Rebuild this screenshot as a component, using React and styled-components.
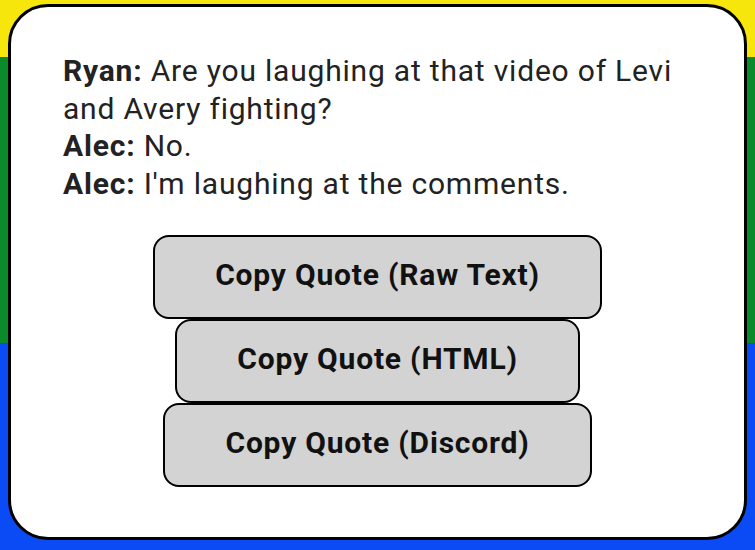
import React from 'react'
import styled, { createGlobalStyle } from 'styled-components'

const GlobalStyle = createGlobalStyle`
html, body {
  margin: 0;
  padding: 0;
}
body {
  font-family: Roboto, "Liberation Sans", sans-serif;
  background: linear-gradient(
    to bottom,
    #f6e60c 0px,
    #f6e60c 57px,
    #0b8a2b 57px,
    #0b8a2b 343px,
    #0a4bf5 343px
  );
  min-height: 550px;
}
`

const lines = [
    { who: 'Ryan', says: 'Are you laughing at that video of Levi and Avery fighting?' },
    { who: 'Alec', says: 'No.' },
    { who: 'Alec', says: "I'm laughing at the comments." },
]

const buttons = ['Copy Quote (Raw Text)', 'Copy Quote (HTML)', 'Copy Quote (Discord)']

function App() {
    return (
        <Page>
            <GlobalStyle />
            <Card>
                <Quote>
                    {lines.map((line, i) => (
                        <Line key={i}>
                            <Name>{line.who}:</Name>&nbsp;{line.says}
                        </Line>
                    ))}
                </Quote>
                <Buttons>
                    {buttons.map((label) => (
                        <CopyButton key={label}>{label}</CopyButton>
                    ))}
                </Buttons>
            </Card>
        </Page>
    )
}

export default App

const Page = styled.div`
padding: 4px 8px 9px 8px;
`

const Card = styled.div`
background: #fff;
border: 3px solid #000;
border-radius: 40px;
padding: 45px 52px 50px 52px;
display: flex;
flex-direction: column;
gap: 33px;
`

const Quote = styled.div`
font-size: 30px;
letter-spacing: 0.8px;
line-height: 37.5px;
color: #222;
`

const Line = styled.div``

const Name = styled.b`
font-weight: 700;
`

const Buttons = styled.div`
display: flex;
flex-direction: column;
align-items: center;
`

const CopyButton = styled.button`
font-family: Roboto, "Liberation Sans", sans-serif;
font-size: 30px;
letter-spacing: 0.8px;
font-weight: 700;
color: #111;
background: #d3d3d3;
border: 2px solid #000;
border-radius: 16px;
padding: 21px 60px 26px;
line-height: 33px;
cursor: pointer;
`
